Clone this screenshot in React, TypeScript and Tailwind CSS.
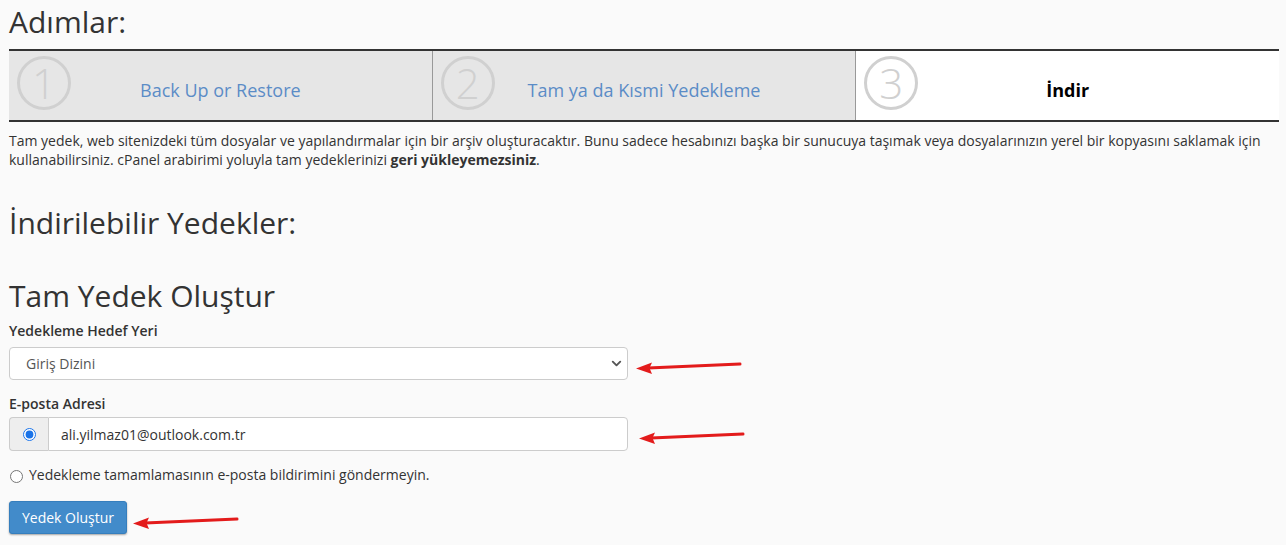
import { ChevronDown } from 'lucide-react';

const steps = [
  { n: '1', label: 'Back Up or Restore', active: false },
  { n: '2', label: 'Tam ya da Kısmi Yedekleme', active: false },
  { n: '3', label: 'İndir', active: true },
];

function Arrow({ className }: { className: string }) {
  return (
    <svg className={`pointer-events-none absolute ${className}`} width="110" height="20" viewBox="0 0 110 20">
      <path d="M106 6 L14 10" stroke="#e31b1b" strokeWidth="3" strokeLinecap="round" fill="none" />
      <path d="M2 10.5 L18 4.5 L15.5 10 L18 16 Z" fill="#e31b1b" />
    </svg>
  );
}

export default function App() {
  return (
    <main
      className="relative min-h-screen w-full bg-[#fafafa] px-[9px] text-[#333]"
      style={{ fontFamily: '"Open Sans", "Noto Sans", sans-serif' }}
    >
      <h1 className="pt-[2px] text-[30px] leading-[40px] font-normal text-[#333]">Adımlar:</h1>

      <div className="mt-[7px] flex w-[1270px] border-y-2 border-[#333]">
        {steps.map((s, i) => (
          <div
            key={s.n}
            className={`relative flex h-[69px] flex-1 items-center justify-center ${
              s.active ? 'bg-white' : 'bg-[#e6e6e6]'
            } ${i > 0 ? 'border-l border-[#999]' : ''}`}
          >
            <div className="absolute left-[8px] top-[5px] flex h-[54px] w-[54px] items-center justify-center rounded-full border-[3px] border-[#d0d0d0] text-[42px] font-light leading-none text-[#d0d0d0]">
              {s.n}
            </div>
            <span
              className={`mt-[10px] text-[18px] ${
                s.active ? 'font-bold text-black' : 'text-[#5b8cc6]'
              }`}
            >
              {s.label}
            </span>
          </div>
        ))}
      </div>

      <p className="mt-[9px] w-[1270px] text-[14px] leading-[19px] text-[#333]">
        Tam yedek, web sitenizdeki tüm dosyalar ve yapılandırmalar için bir arşiv oluşturacaktır. Bunu sadece
        hesabınızı başka bir sunucuya taşımak veya dosyalarınızın yerel bir kopyasını saklamak için
        kullanabilirsiniz. cPanel arabirimi yoluyla tam yedeklerinizi{' '}
        <b className="font-bold leading-[19px]">geri yükleyemezsiniz</b>.
      </p>

      <h2 className="mt-[34px] text-[30px] leading-[40px] font-normal">İndirilebilir Yedekler:</h2>

      <h2 className="mt-[33px] text-[30px] leading-[40px] font-normal">Tam Yedek Oluştur</h2>

      <label className="mt-[5px] block text-[14px] leading-[20px] font-semibold">Yedekleme Hedef Yeri</label>
      <div className="relative mt-[6px] w-[619px]">
        <select
          defaultValue="homedir"
          className="h-[33px] w-full appearance-none rounded-[4px] border border-[#cccccc] bg-white pl-[16px] text-[14px] text-[#555] outline-none"
          style={{ fontFamily: '"Open Sans", sans-serif' }}
        >
          <option value="homedir">Giriş Dizini</option>
        </select>
        <ChevronDown className="pointer-events-none absolute right-[4px] top-[9px] h-[15px] w-[15px] text-[#555]" strokeWidth={3} />
      </div>

      <label className="mt-[14px] block text-[14px] leading-[20px] font-semibold">E-posta Adresi</label>
      <div className="mt-[3px] flex h-[34px] w-[619px]">
        <span className="flex w-[39px] items-center justify-center rounded-l-[4px] border border-r-0 border-[#cccccc] bg-[#eeeeee]">
          <input type="radio" name="notify" defaultChecked className="m-0 h-[13px] w-[13px] accent-[#1a73e8]" />
        </span>
        <input
          type="text"
          defaultValue="ali.yilmaz01@outlook.com.tr"
          className="flex-1 rounded-r-[4px] border border-[#cccccc] bg-white pl-[12px] text-[14px] text-[#333] outline-none"
          style={{ fontFamily: '"Open Sans", sans-serif' }}
        />
      </div>

      <label className="mt-[14px] flex items-center gap-[6px] text-[14px] leading-[20px]">
        <input type="radio" name="notify" className="m-0 ml-[1px] mt-[2px] h-[13px] w-[13px]" />
        Yedekleme tamamlamasının e-posta bildirimini göndermeyin.
      </label>

      <button className="mt-[16px] h-[33px] w-[118px] rounded-[3px] border border-[#357ebd] bg-[#428bca] text-[14px] text-white shadow-[0_1px_2px_rgba(0,0,0,0.35)]">
        Yedek Oluştur
      </button>

      <Arrow className="left-[634px] top-[358px]" />
      <Arrow className="left-[637px] top-[428px]" />
      <Arrow className="left-[131px] top-[513px]" />
    </main>
  );
}
